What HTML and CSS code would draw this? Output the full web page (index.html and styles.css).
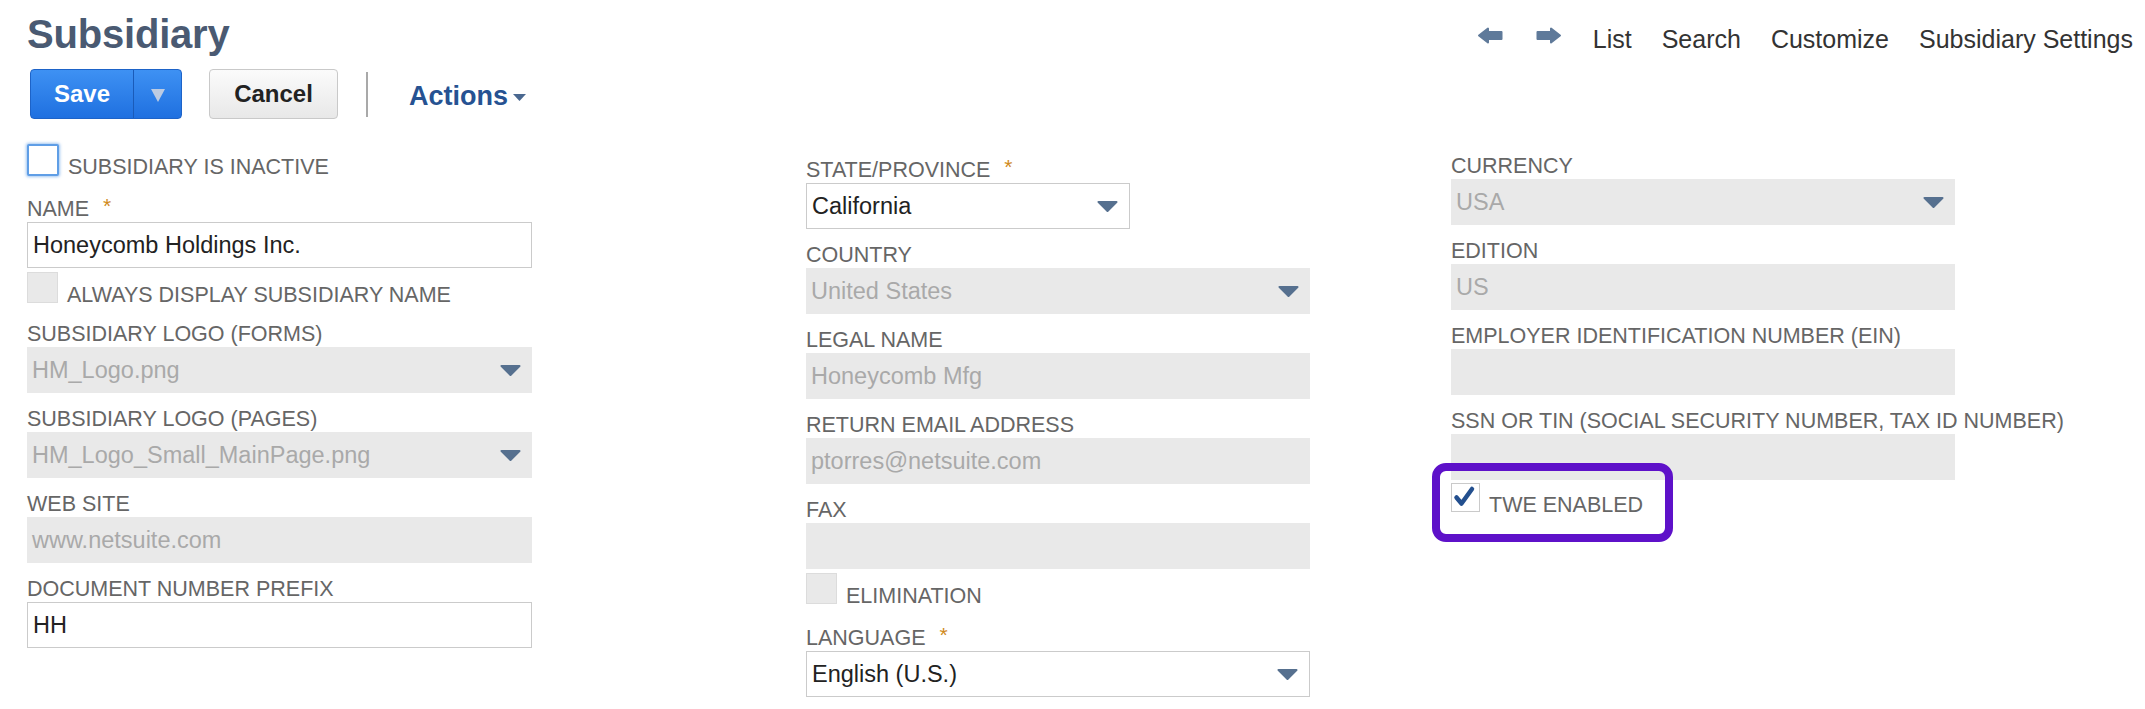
FILE: index.html
```html
<!DOCTYPE html>
<html lang="en">
<head>
<meta charset="utf-8">
<title>Subsidiary</title>
<link rel="stylesheet" href="styles.css">
</head>
<body>
<div class="page">
  <header class="top">
    <h1 class="title">Subsidiary</h1>
    <nav class="nav">
      <svg class="nav-arrow" width="26" height="17" viewBox="0 0 26 17"><path d="M2 8.5 L11 1.5 L11 5 L24.5 5 L24.5 12 L11 12 L11 15.5 Z" fill="#5f7a9a" stroke="#5f7a9a" stroke-width="2" stroke-linejoin="round"/></svg>
      <svg class="nav-arrow" width="26" height="17" viewBox="0 0 26 17"><path d="M24 8.5 L15 1.5 L15 5 L1.5 5 L1.5 12 L15 12 L15 15.5 Z" fill="#5f7a9a" stroke="#5f7a9a" stroke-width="2" stroke-linejoin="round"/></svg>
      <a class="nav-link nav-first">List</a>
      <a class="nav-link">Search</a>
      <a class="nav-link">Customize</a>
      <a class="nav-link">Subsidiary Settings</a>
    </nav>
  </header>

  <div class="toolbar">
    <div class="btn-save">
      <span class="save-main">Save</span>
      <span class="save-drop"><svg width="14" height="13" viewBox="0 0 14 13"><path d="M0 0 H14 L7 13 Z" fill="#bccbe2"/></svg></span>
    </div>
    <div class="btn-cancel">Cancel</div>
    <div class="divider"></div>
    <div class="actions">Actions<svg class="actions-caret" width="13" height="7" viewBox="0 0 13 7"><path d="M0 0 H13 L6.5 7 Z" fill="#4a6890"/></svg></div>
  </div>

  <div class="form">
    <div class="col col1">
      <div class="cb-row gap-after">
        <span class="cb cb-focus"></span>
        <span class="cb-label">SUBSIDIARY IS INACTIVE</span>
      </div>
      <div class="field tight">
        <div class="label">NAME <span class="req">*</span></div>
        <div class="input white">Honeycomb Holdings Inc.</div>
      </div>
      <div class="cb-row">
        <span class="cb cb-gray"></span>
        <span class="cb-label">ALWAYS DISPLAY SUBSIDIARY NAME</span>
      </div>
      <div class="field">
        <div class="label">SUBSIDIARY LOGO (FORMS)</div>
        <div class="input gray">HM_Logo.png<svg class="sel-arrow" width="21" height="11" viewBox="0 0 21 11"><path d="M1.5 1 H19.5 L10.5 10 Z" fill="#56708f" stroke="#56708f" stroke-width="2" stroke-linejoin="round"/></svg></div>
      </div>
      <div class="field">
        <div class="label">SUBSIDIARY LOGO (PAGES)</div>
        <div class="input gray">HM_Logo_Small_MainPage.png<svg class="sel-arrow" width="21" height="11" viewBox="0 0 21 11"><path d="M1.5 1 H19.5 L10.5 10 Z" fill="#56708f" stroke="#56708f" stroke-width="2" stroke-linejoin="round"/></svg></div>
      </div>
      <div class="field">
        <div class="label">WEB SITE</div>
        <div class="input gray">www.netsuite.com</div>
      </div>
      <div class="field">
        <div class="label">DOCUMENT NUMBER PREFIX</div>
        <div class="input white">HH</div>
      </div>
    </div>

    <div class="col col2">
      <div class="field">
        <div class="label">STATE/PROVINCE <span class="req">*</span></div>
        <div class="input white short">California<svg class="sel-arrow" width="21" height="11" viewBox="0 0 21 11"><path d="M1.5 1 H19.5 L10.5 10 Z" fill="#56708f" stroke="#56708f" stroke-width="2" stroke-linejoin="round"/></svg></div>
      </div>
      <div class="field">
        <div class="label">COUNTRY</div>
        <div class="input gray">United States<svg class="sel-arrow" width="21" height="11" viewBox="0 0 21 11"><path d="M1.5 1 H19.5 L10.5 10 Z" fill="#56708f" stroke="#56708f" stroke-width="2" stroke-linejoin="round"/></svg></div>
      </div>
      <div class="field">
        <div class="label">LEGAL NAME</div>
        <div class="input gray">Honeycomb Mfg</div>
      </div>
      <div class="field">
        <div class="label">RETURN EMAIL ADDRESS</div>
        <div class="input gray">ptorres@netsuite.com</div>
      </div>
      <div class="field tight">
        <div class="label">FAX</div>
        <div class="input gray"></div>
      </div>
      <div class="cb-row gap-after">
        <span class="cb cb-gray"></span>
        <span class="cb-label">ELIMINATION</span>
      </div>
      <div class="field">
        <div class="label">LANGUAGE <span class="req">*</span></div>
        <div class="input white">English (U.S.)<svg class="sel-arrow" width="21" height="11" viewBox="0 0 21 11"><path d="M1.5 1 H19.5 L10.5 10 Z" fill="#56708f" stroke="#56708f" stroke-width="2" stroke-linejoin="round"/></svg></div>
      </div>
    </div>

    <div class="col col3">
      <div class="field">
        <div class="label">CURRENCY</div>
        <div class="input gray">USA<svg class="sel-arrow" width="21" height="11" viewBox="0 0 21 11"><path d="M1.5 1 H19.5 L10.5 10 Z" fill="#56708f" stroke="#56708f" stroke-width="2" stroke-linejoin="round"/></svg></div>
      </div>
      <div class="field">
        <div class="label">EDITION</div>
        <div class="input gray">US</div>
      </div>
      <div class="field">
        <div class="label">EMPLOYER IDENTIFICATION NUMBER (EIN)</div>
        <div class="input gray"></div>
      </div>
      <div class="field twe-before">
        <div class="label">SSN OR TIN (SOCIAL SECURITY NUMBER, TAX ID NUMBER)</div>
        <div class="input gray"></div>
      </div>
      <div class="cb-row twe-row">
        <span class="cb cb-checked"><svg width="29" height="29" viewBox="0 0 29 29"><path d="M5.5 14.5 L10.5 20.5 L21 6" fill="none" stroke="#234f8e" stroke-width="4.5" stroke-linecap="round" stroke-linejoin="round"/></svg></span>
        <span class="cb-label">TWE ENABLED</span>
        <span class="highlight"></span>
      </div>
    </div>
  </div>
</div>
</body>
</html>
```

FILE: styles.css
```css
html, body {
  margin: 0;
  padding: 0;
  background: #ffffff;
}

body {
  font-family: "Liberation Sans", Arial, sans-serif;
  color: #333333;
}

.page {
  padding: 0 12px 0 27px;
}

/* Header */
.top {
  display: flex;
  justify-content: space-between;
  align-items: flex-start;
  padding-top: 11px;
}

.title {
  margin: 0;
  font-size: 40px;
  line-height: 46px;
  font-weight: 700;
  color: #4a5a72;
  letter-spacing: -0.2px;
}

.nav {
  display: flex;
  align-items: center;
  margin-top: 13px;
  height: 30px;
  font-size: 25px;
  line-height: 30px;
  color: #333333;
}

.nav-arrow {
  display: block;
  margin-bottom: 8px;
  margin-left: 8px;
}

.nav-arrow + .nav-arrow {
  margin-left: 33px;
}

.nav-link {
  margin-left: 30px;
  cursor: pointer;
}

.nav-first {
  margin-left: 31px;
}

/* Toolbar */
.toolbar {
  display: flex;
  align-items: center;
  margin-top: 12px;
  margin-left: 3px;
  height: 50px;
}

.btn-save {
  display: flex;
  height: 50px;
  width: 152px;
  box-sizing: border-box;
  border: 1px solid #1d63c8;
  border-radius: 4px;
  background: linear-gradient(#3e91f3, #1f70e0);
  overflow: hidden;
}

.save-main {
  width: 102px;
  display: flex;
  align-items: center;
  justify-content: center;
  color: #ffffff;
  font-weight: 700;
  font-size: 24px;
}

.save-drop {
  flex: 1;
  display: flex;
  align-items: center;
  justify-content: center;
  border-left: 1px solid #1a5bb9;
  padding-top: 2px;
}

.btn-cancel {
  margin-left: 27px;
  width: 129px;
  height: 50px;
  box-sizing: border-box;
  border: 1px solid #c9c9c9;
  border-radius: 4px;
  background: linear-gradient(#fbfbfb, #e8e8e8);
  display: flex;
  align-items: center;
  justify-content: center;
  font-weight: 700;
  font-size: 24px;
  color: #222222;
}

.divider {
  margin-left: 28px;
  width: 2px;
  height: 45px;
  background: #a9a9a9;
}

.actions {
  margin-left: 41px;
  display: flex;
  align-items: center;
  font-weight: 700;
  font-size: 27px;
  color: #265292;
  padding-top: 4px;
}

.actions-caret {
  margin-left: 5px;
  margin-top: 3px;
}

/* Form */
.form {
  display: flex;
  margin-top: 25px;
}

.col {
  flex: none;
}

.col1 {
  width: 779px;
}

.col2 {
  width: 645px;
  padding-top: 13px;
}

.col3 {
  width: 660px;
  padding-top: 9px;
}

.field {
  margin-bottom: 13px;
}

.field.tight {
  margin-bottom: 4px;
}

.field.twe-before {
  margin-bottom: 3px;
}

.label {
  font-size: 21.5px;
  line-height: 26px;
  color: #666666;
  white-space: nowrap;
}

.req {
  color: #d08a1c;
  margin-left: 8px;
  font-size: 21px;
  position: relative;
  top: -3px;
}

.input {
  width: 505px;
  height: 46px;
  box-sizing: border-box;
  display: flex;
  align-items: center;
  padding: 0 11px 0 5px;
  font-size: 23.5px;
  white-space: nowrap;
}

.col2 .input,
.col3 .input {
  width: 504px;
}

.col2 .input.short {
  width: 324px;
}

.input.white {
  background: #ffffff;
  border: 1px solid #cbcbcb;
  color: #222222;
}

.input.gray {
  background: #e9e9e9;
  color: #a9a9a9;
}

.sel-arrow {
  margin-left: auto;
  flex: none;
}

/* Checkbox rows */
.cb-row {
  display: flex;
  align-items: flex-start;
  margin-bottom: 13px;
}

.cb-row.gap-after {
  margin-bottom: 16px;
}

.cb {
  flex: none;
  box-sizing: border-box;
  width: 32px;
  height: 32px;
}

.cb-focus {
  border: 2px solid #5f9ee6;
  border-radius: 2px;
  background: #ffffff;
  box-shadow: 0 0 3px 1px rgba(80, 150, 230, 0.55);
}

.cb-gray {
  width: 31px;
  height: 31px;
  background: #e9e9e9;
  border: 1px solid #dcdcdc;
}

.cb-label {
  margin-left: 9px;
  margin-top: 10px;
  font-size: 21.5px;
  line-height: 26px;
  color: #666666;
  white-space: nowrap;
}

.twe-row {
  position: relative;
}

.cb-checked {
  width: 29px;
  height: 29px;
  border: 1px solid #cacaca;
  background: #ffffff;
  position: relative;
}

.cb-checked svg {
  position: absolute;
  left: -1px;
  top: -1px;
}

.twe-row .cb-label {
  margin-left: 9px;
  margin-top: 9px;
}

.highlight {
  position: absolute;
  left: -19px;
  top: -20px;
  width: 241px;
  height: 79px;
  box-sizing: border-box;
  border: 8px solid #5e11c9;
  border-radius: 14px;
  pointer-events: none;
}
```
